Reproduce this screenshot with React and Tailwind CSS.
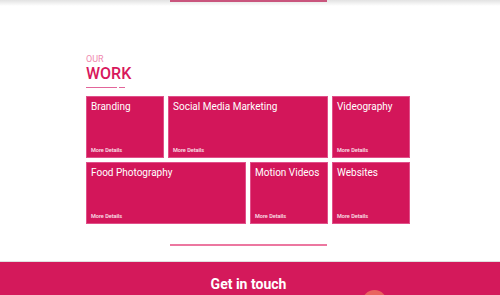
const WORK = [
  { title: "Branding", span: "col-span-1" },
  { title: "Social Media Marketing", span: "col-span-2" },
  { title: "Videography", span: "col-span-1" },
  { title: "Food Photography", span: "col-span-2" },
  { title: "Motion Videos", span: "col-span-1" },
  { title: "Websites", span: "col-span-1" },
];

function WorkCard({ title, span }) {
  return (
    <div className={`${span} h-[62px] bg-[#d3165a] border border-[#e0508a] flex flex-col justify-between px-[4px] pt-[4px] pb-[4px]`}>
      <h3 className="text-[10px] leading-[12px] text-white">{title}</h3>
      <a href="#" className="text-[5.5px] leading-[6px] font-medium text-white/90">More Details</a>
    </div>
  );
}

export default function App() {
  return (
    <div className="w-[500px] h-[295px] overflow-hidden bg-white font-['Roboto',sans-serif]">
      {/* shadow from section above */}
      <div className="h-[6px] bg-gradient-to-b from-[#e2e2e2] to-white">
        <div className="ml-[170px] w-[157px] h-[2px] bg-[#c9557d]" />
      </div>

      <section className="ml-[86px] w-[324px] pt-[48px]">
        <p className="text-[9px] leading-[10px] text-[#f08ab0] uppercase">Our</p>
        <h2 className="text-[16px] leading-[18px] font-medium text-[#d8175c] mt-[1px]">WORK</h2>
        <div className="flex gap-[2px] mt-[4px]">
          <span className="w-[31px] h-[1px] bg-[#e2659a]" />
          <span className="w-[6px] h-[1px] bg-[#e2659a]" />
        </div>

        <div className="grid grid-cols-4 gap-[4px] mt-[8px]">
          {WORK.map(w => <WorkCard key={w.title} {...w} />)}
        </div>
      </section>

      <div className="ml-[170px] w-[157px] h-[2px] bg-[#ec77a0] mt-[20px]" />

      <footer className="relative mt-[15px] h-[60px] border-t border-[#e0e0e0] bg-[#d4195b] text-center pt-[12px]">
        <h2 className="w-[497px] text-[14px] leading-[20px] font-bold text-white">Get in touch</h2>
        <div className="absolute left-[362px] top-[28px] w-[25px] h-[25px] rounded-full bg-[#e9645f]" />
      </footer>
    </div>
  );
}
